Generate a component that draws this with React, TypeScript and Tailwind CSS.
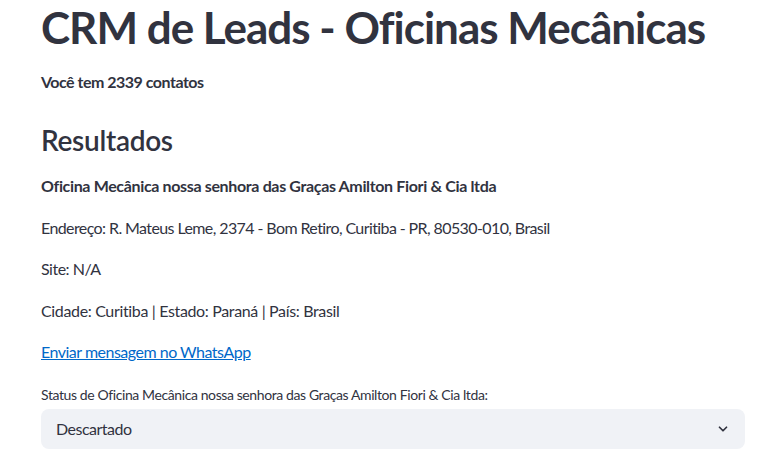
import React from 'react';
import { ChevronDown } from 'lucide-react';

const lead = {
  nome: 'Oficina Mecânica nossa senhora das Graças Amilton Fiori & Cia ltda',
  endereco: 'R. Mateus Leme, 2374 - Bom Retiro, Curitiba - PR, 80530-010, Brasil',
  site: 'N/A',
  cidade: 'Curitiba',
  estado: 'Paraná',
  pais: 'Brasil',
  status: 'Descartado',
};

export default function App() {
  return (
    <div className="min-h-screen bg-white text-[#31333f] font-['Lato',sans-serif] tracking-[-0.5px]">
      <div className="pl-[41px] pr-[30px] flex flex-col">
        <h1 className="mt-px text-[44px] leading-[52px] font-bold tracking-[-1px]">
          CRM de Leads - Oficinas Mecânicas
        </h1>
        <p className="mt-[17px] text-[16px] leading-6 font-bold">Você tem 2339 contatos</p>

        <h3 className="mt-[28px] text-[28px] leading-9 font-semibold tracking-[-0.3px]">Resultados</h3>

        <p className="mt-[16px] text-[16px] leading-6 font-bold tracking-[-0.35px]">{lead.nome}</p>
        <p className="mt-[18px] text-[16px] leading-6 tracking-[-0.6px]">Endereço: {lead.endereco}</p>
        <p className="mt-[17px] text-[16px] leading-6">Site: {lead.site}</p>
        <p className="mt-[18px] text-[16px] leading-6 tracking-[-0.35px]">
          Cidade: {lead.cidade} | Estado: {lead.estado} | País: {lead.pais}
        </p>
        <p className="mt-[17px] text-[16px] leading-6">
          <a href="#" className="text-[#0068c9] underline">
            Enviar mensagem no WhatsApp
          </a>
        </p>

        <label className="mt-[21px] text-[14px] leading-5 tracking-[-0.4px]">Status de {lead.nome}:</label>
        <div className="mt-[4px] h-10 rounded-lg bg-[#f0f2f6] flex items-center justify-between pl-[15px] pr-[15px]">
          <span className="text-[16px]">{lead.status}</span>
          <ChevronDown className="w-[14px] h-[14px]" strokeWidth={3} />
        </div>
      </div>
    </div>
  );
}
